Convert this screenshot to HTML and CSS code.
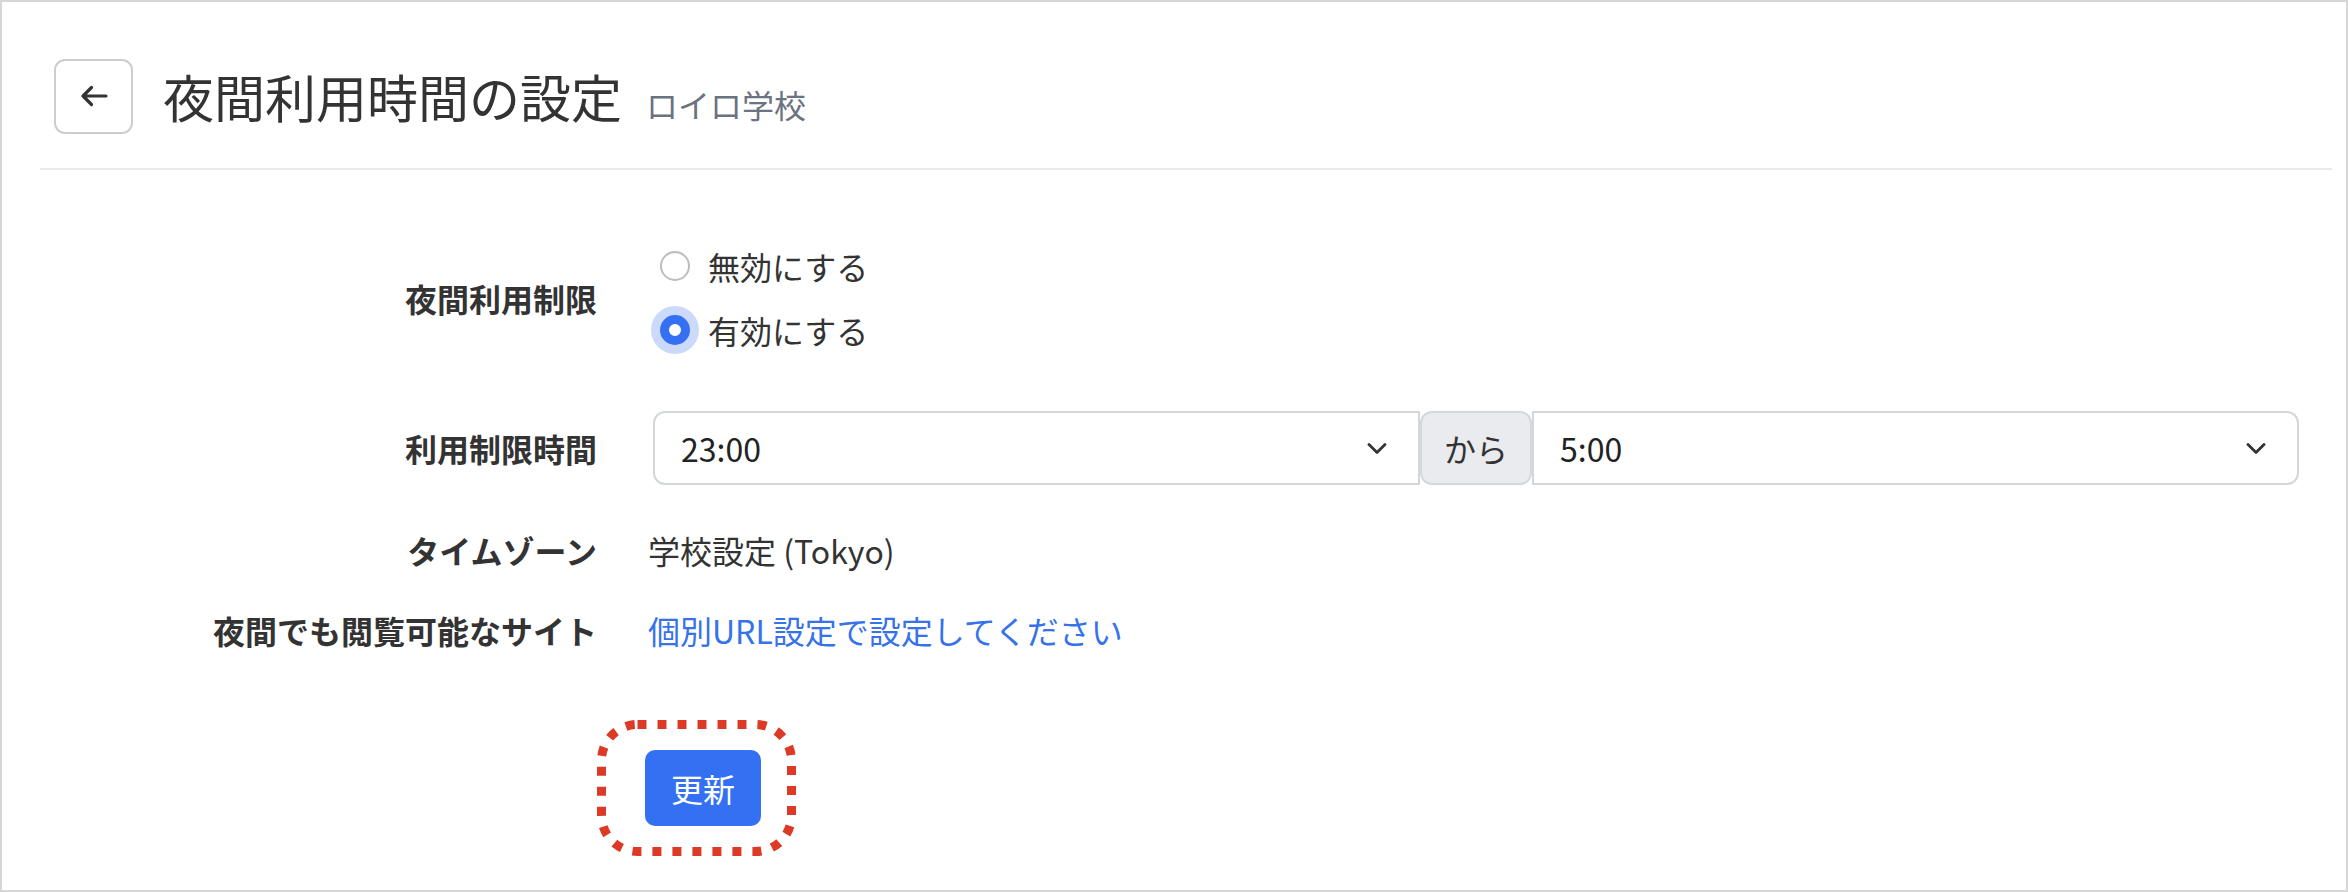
FILE: index.html
```html
<!DOCTYPE html>
<html lang="ja">
<head>
<meta charset="utf-8">
<title>夜間利用時間の設定</title>
<link rel="stylesheet" href="styles.css">
</head>
<body>
<div class="frame">
  <header class="header">
    <button class="back" type="button" aria-label="戻る">
      <svg width="28" height="22" viewBox="0 0 28 22"><path d="M26 11H3M11.5 2.5L3 11l8.5 8.5" fill="none" stroke="#333" stroke-width="3.2" stroke-linecap="round" stroke-linejoin="round"/></svg>
    </button>
    <div class="titles">
      <h1 class="title">夜間利用時間の設定</h1>
      <span class="subtitle">ロイロ学校</span>
    </div>
  </header>
  <div class="form">
    <div class="row row-toggle">
      <div class="label">夜間利用制限</div>
      <div class="value radios">
        <div class="radio"><span class="dot"></span><span>無効にする</span></div>
        <div class="radio checked"><span class="dot"></span><span>有効にする</span></div>
      </div>
    </div>
    <div class="row row-time">
      <div class="label">利用制限時間</div>
      <div class="value group">
        <div class="select first"><span>23:00</span><svg class="chev" width="20" height="11" viewBox="0 0 20 11"><path d="M2 1.5l8 8 8-8" fill="none" stroke="#333" stroke-width="2.8" stroke-linecap="round" stroke-linejoin="round"/></svg></div>
        <div class="addon">から</div>
        <div class="select last"><span>5:00</span><svg class="chev" width="20" height="11" viewBox="0 0 20 11"><path d="M2 1.5l8 8 8-8" fill="none" stroke="#333" stroke-width="2.8" stroke-linecap="round" stroke-linejoin="round"/></svg></div>
      </div>
    </div>
    <div class="row row-tz">
      <div class="label">タイムゾーン</div>
      <div class="value text">学校設定 (Tokyo)</div>
    </div>
    <div class="row row-site">
      <div class="label">夜間でも閲覧可能なサイト</div>
      <div class="value text"><a class="link" href="#">個別URL設定で設定してください</a></div>
    </div>
    <div class="row row-action">
      <div class="label"></div>
      <div class="value action-cell">
        <div class="action">
          <button class="submit" type="button">更新</button>
          <svg class="highlight" width="199" height="136" viewBox="0 0 199 136"><rect x="4.5" y="4.5" width="190" height="127" rx="36" ry="36" fill="none" stroke="#dc3a26" stroke-width="9" stroke-dasharray="9 11"/></svg>
        </div>
      </div>
    </div>
  </div>
</div>
</body>
</html>
```
FILE: styles.css
```css
* { box-sizing: border-box; }
html, body { margin: 0; padding: 0; background: #fff; }
body {
  font-family: "Noto Sans CJK JP", "Noto Sans", sans-serif;
  color: #333;
}
.frame {
  height: 892px;
  border: 2px solid #d6d6d6;
  overflow: hidden;
}
.header {
  display: flex;
  align-items: center;
  margin: 0 14px 0 38px;
  padding: 56px 0 34px 14px;
  border-bottom: 2px solid #e9e9e9;
}
.back {
  width: 79px;
  height: 75px;
  border: 2px solid #cdcdcd;
  border-radius: 11px;
  background: #fff;
  display: flex;
  align-items: center;
  justify-content: center;
  padding: 0;
  flex: none;
}
.titles {
  display: flex;
  align-items: baseline;
  margin-left: 30px;
  gap: 24px;
}
.title {
  margin: 0;
  font-size: 51px;
  font-weight: 400;
  line-height: 76px;
  color: #333;
}
.subtitle {
  font-size: 32px;
  color: #6b7280;
}
.form {
  padding: 64px 47px 0 38px;
}
.row {
  display: flex;
  align-items: center;
}
.label {
  width: 557px;
  flex: none;
  text-align: right;
  font-size: 32px;
  font-weight: 700;
  line-height: 48px;
  color: #333;
}
.value {
  margin-left: 51px;
  flex: 1;
  font-size: 32px;
  line-height: 48px;
}
.radios {
  display: flex;
  flex-direction: column;
}
.radio {
  display: flex;
  align-items: center;
  height: 64px;
  padding-left: 12px;
  gap: 18px;
  color: #333;
}
.dot {
  width: 30px;
  height: 30px;
  border-radius: 50%;
  border: 2px solid #bdbdbd;
  background: #fff;
  flex: none;
}
.radio.checked .dot {
  border: 9px solid #3570f3;
  background: #fff;
  box-shadow: 0 0 0 9px #cbdafb;
}
.row-time { margin-top: 49px; }
.value.group {
  display: flex;
  height: 74px;
  margin-left: 56px;
}
.select {
  flex: 1;
  display: flex;
  align-items: center;
  padding: 0 31px 0 26px;
  border: 2px solid #d3d6db;
  background: #fff;
  color: #222;
}
.select.first { border-radius: 12px 0 0 12px; }
.select.last { border-radius: 0 12px 12px 0; }
.chev { margin-left: auto; }
.addon {
  width: 112px;
  flex: none;
  display: flex;
  align-items: center;
  justify-content: center;
  background: #e9ebef;
  border: 2px solid #d3d6db;
  border-radius: 12px;
  color: #333;
}
.row-tz { margin-top: 41px; }
.row-site { margin-top: 32px; }
.text { color: #333; }
.link {
  color: #3672ea;
  text-decoration: none;
}
.row-action { margin-top: 96px; }
.value.action-cell { margin-left: 48px; }
.action {
  position: relative;
  display: inline-block;
}
.submit {
  display: block;
  width: 116px;
  height: 76px;
  border: none;
  border-radius: 10px;
  background: #3370f2;
  color: #fff;
  font-family: inherit;
  font-size: 32px;
  padding: 0;
}
.highlight {
  position: absolute;
  left: -48px;
  top: -30px;
  pointer-events: none;
}
```
